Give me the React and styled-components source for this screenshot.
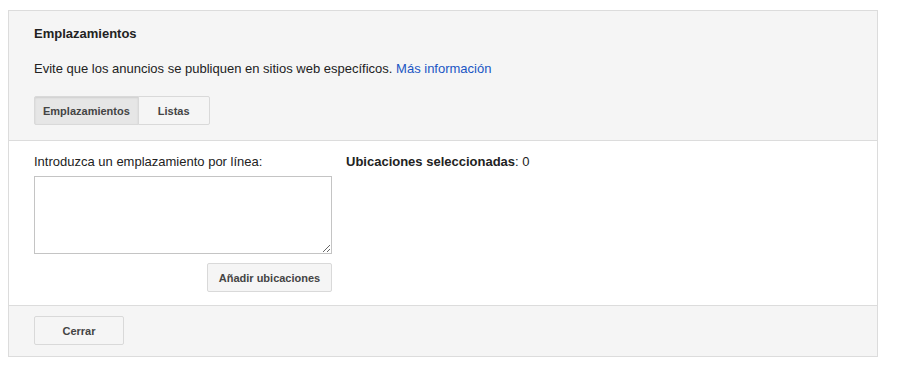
import React from 'react';
import styled, {createGlobalStyle} from 'styled-components';

const Global = createGlobalStyle`
  body {
    margin: 0;
    background: #fff;
    font-family: "Liberation Sans", Arial, sans-serif;
    font-size: 13px;
    color: #222;
  }
`;

const Page = styled.div`
  padding: 10px 22px 0 8px;
`;

const Panel = styled.div`
  border: 1px solid #dcdcdc;
  box-sizing: border-box;
  width: 870px;
`;

const Header = styled.div`
  background: #f5f5f5;
  padding: 14px 25px 14px 25px;
  border-bottom: 1px solid #dcdcdc;
  height: 130px;
  box-sizing: border-box;
`;

const Title = styled.div`
  font-weight: bold;
  font-size: 13px;
  line-height: 18px;
`;

const Desc = styled.div`
  margin-top: 17px;
  line-height: 18px;
  font-size: 13px;
`;

const Link = styled.a`
  color: #1a55c4;
  text-decoration: none;
`;

const Tabs = styled.div`
  display: flex;
  margin-top: 18px;
`;

const Tab = styled.button`
  font-family: inherit;
  font-size: 11px;
  font-weight: bold;
  color: #444;
  height: 29px;
  padding: 0 ${props => props.pad};
  border: 1px solid #d9d9d9;
  margin-left: ${props => (props.first ? '0' : '-1px')};
  background: ${props => (props.active ? '#e6e6e6' : '#f5f5f5')};
  box-shadow: ${props => (props.active ? 'inset 0 1px 2px rgba(0,0,0,0.1)' : 'none')};
  border-radius: ${props => (props.first ? '2px 0 0 2px' : '0 2px 2px 0')};
  cursor: pointer;
`;

const Body = styled.div`
  display: flex;
  gap: 14px;
  padding: 13px 25px 13px 25px;
  height: 165px;
  box-sizing: border-box;
  border-bottom: 1px solid #dcdcdc;
`;

const Column = styled.div`
  display: flex;
  flex-direction: column;
  width: ${props => props.width};
`;

const Label = styled.div`
  line-height: 16px;
`;

const TextArea = styled.textarea`
  margin-top: 6px;
  width: 298px;
  height: 78px;
  box-sizing: border-box;
  border: 1px solid #c4c4c4;
  resize: vertical;
  font-family: inherit;
`;

const Button = styled.button`
  font-family: inherit;
  font-size: 11px;
  font-weight: bold;
  color: #444;
  height: 29px;
  width: ${props => props.width};
  border: 1px solid #d9d9d9;
  border-radius: 2px;
  background: #f5f5f5;
  cursor: pointer;
  align-self: ${props => props.align || 'auto'};
  margin-top: ${props => props.top || '0'};
`;

const Selected = styled.div`
  line-height: 16px;
  b {
    font-weight: bold;
  }
`;

const Footer = styled.div`
  background: #f5f5f5;
  padding: 10px 25px 10px 25px;
  height: 50px;
  box-sizing: border-box;
`;

export default function App() {
  return (
    <>
      <Global />
      <Page>
        <Panel>
          <Header>
            <Title>Emplazamientos</Title>
            <Desc>
              Evite que los anuncios se publiquen en sitios web específicos.{' '}
              <Link href="#">Más información</Link>
            </Desc>
            <Tabs>
              <Tab first active pad="8px">Emplazamientos</Tab>
              <Tab pad="19px">Listas</Tab>
            </Tabs>
          </Header>
          <Body>
            <Column width="298px">
              <Label>Introduzca un emplazamiento por línea:</Label>
              <TextArea />
              <Button width="125px" align="flex-end" top="9px">Añadir ubicaciones</Button>
            </Column>
            <Column>
              <Selected><b>Ubicaciones seleccionadas</b>: 0</Selected>
            </Column>
          </Body>
          <Footer>
            <Button width="90px">Cerrar</Button>
          </Footer>
        </Panel>
      </Page>
    </>
  );
}
